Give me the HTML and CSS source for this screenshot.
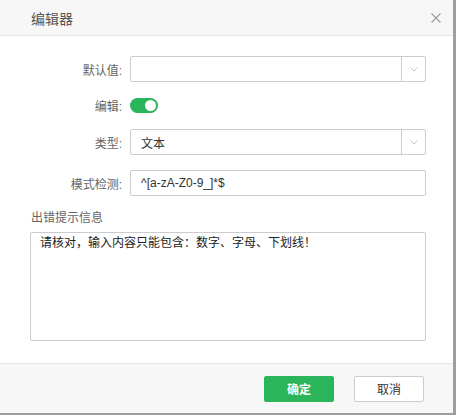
FILE: index.html
```html
<!DOCTYPE html>
<html lang="zh">
<head>
  <meta charset="UTF-8">
  <title>编辑器</title>
  <link rel="stylesheet" href="styles.css">
</head>
<body>
  <div class="dialog">
    <!-- Header -->
    <div class="dialog-header">
      <span class="dialog-title">编辑器</span>
      <svg class="close" width="10" height="10" viewBox="0 0 10 10">
        <path d="M0.5 0.5 L9.5 9.5 M9.5 0.5 L0.5 9.5" stroke="#9a9a9a" stroke-width="1.1" fill="none"/>
      </svg>
    </div>

    <!-- Body -->
    <div class="dialog-body">
      <div class="form-row">
        <label class="form-label">默认值:</label>
        <div class="select">
          <span class="select-value"></span>
          <span class="select-arrow">
            <svg width="8" height="5" viewBox="0 0 8 5"><path d="M0.5 0.5 L4 4 L7.5 0.5" stroke="#c4c4c4" fill="none"/></svg>
          </span>
        </div>
      </div>

      <div class="form-row row-toggle">
        <label class="form-label">编辑:</label>
        <span class="toggle"><span class="knob"></span></span>
      </div>

      <div class="form-row">
        <label class="form-label">类型:</label>
        <div class="select">
          <span class="select-value">文本</span>
          <span class="select-arrow">
            <svg width="8" height="5" viewBox="0 0 8 5"><path d="M0.5 0.5 L4 4 L7.5 0.5" stroke="#c4c4c4" fill="none"/></svg>
          </span>
        </div>
      </div>

      <div class="form-row">
        <label class="form-label">模式检测:</label>
        <div class="text-input">^[a-zA-Z0-9_]*$</div>
      </div>

      <div class="section-label">出错提示信息</div>
      <div class="textarea">请核对，输入内容只能包含：数字、字母、下划线！</div>
    </div>

    <!-- Footer -->
    <div class="dialog-footer">
      <button class="btn btn-primary">确定</button>
      <button class="btn">取消</button>
    </div>
  </div>
</body>
</html>
```

FILE: styles.css
```css
/* General styling */
body {
  margin: 0;
  background-color: #9e9e9e;
  font-family: "Liberation Sans", "Noto Sans CJK SC", sans-serif;
  font-size: 12px;
  color: #333;
}

.dialog {
  width: 453px;
  height: 413px;
  background-color: #fff;
  display: flex;
  flex-direction: column;
}

/* Header */
.dialog-header {
  height: 35px;
  border-bottom: 1px solid #e6e6e6;
  background-color: #f7f7f7;
  display: flex;
  align-items: center;
  justify-content: space-between;
  padding: 0 12px 0 31px;
}

.dialog-title {
  font-size: 14px;
  color: #555;
}

.close {
  display: block;
  margin-top: 1px;
}

/* Body */
.dialog-body {
  flex: 1;
  padding: 20px 27px 0 30px;
}

.form-row {
  display: flex;
  align-items: center;
  margin-bottom: 15px;
}

.row-toggle {
  height: 17px;
}

.form-label {
  width: 92px;
  margin-right: 8px;
  text-align: right;
  color: #666;
}

.select, .text-input {
  flex: 1;
  height: 24px;
  border: 1px solid #ccc;
  border-radius: 2px;
  display: flex;
  align-items: center;
}

.select-value {
  flex: 1;
  padding-left: 10px;
  color: #333;
}

.select-arrow {
  width: 23px;
  height: 24px;
  border-left: 1px solid #ccc;
  display: flex;
  align-items: center;
  justify-content: center;
}

.select-arrow svg {
  display: block;
}

.text-input {
  padding-left: 10px;
  color: #333;
}

.toggle {
  width: 28px;
  height: 15px;
  border-radius: 8px;
  background-color: #2bb55b;
  position: relative;
}

.toggle .knob {
  position: absolute;
  right: 2px;
  top: 2px;
  width: 11px;
  height: 11px;
  border-radius: 50%;
  background-color: #fff;
}

.section-label {
  margin-top: -1px;
  line-height: 16px;
  color: #666;
  padding-left: 1px;
}

.textarea {
  margin-top: 6px;
  height: 101px;
  border: 1px solid #ccc;
  border-radius: 2px;
  padding: 3px 9px;
  line-height: 14px;
  color: #222;
}

/* Footer */
.dialog-footer {
  height: 49px;
  border-top: 1px solid #e6e6e6;
  background-color: #f7f7f7;
  display: flex;
  align-items: center;
  justify-content: flex-end;
  gap: 20px;
  padding-right: 29px;
}

.btn {
  width: 70px;
  height: 26px;
  border: 1px solid #ccc;
  border-radius: 2px;
  background-color: #fff;
  font-family: inherit;
  font-size: 12px;
  color: #333;
  padding: 0;
}

.btn-primary {
  background-color: #2bb55b;
  border-color: #2bb55b;
  color: #fff;
  font-weight: bold;
}
```
